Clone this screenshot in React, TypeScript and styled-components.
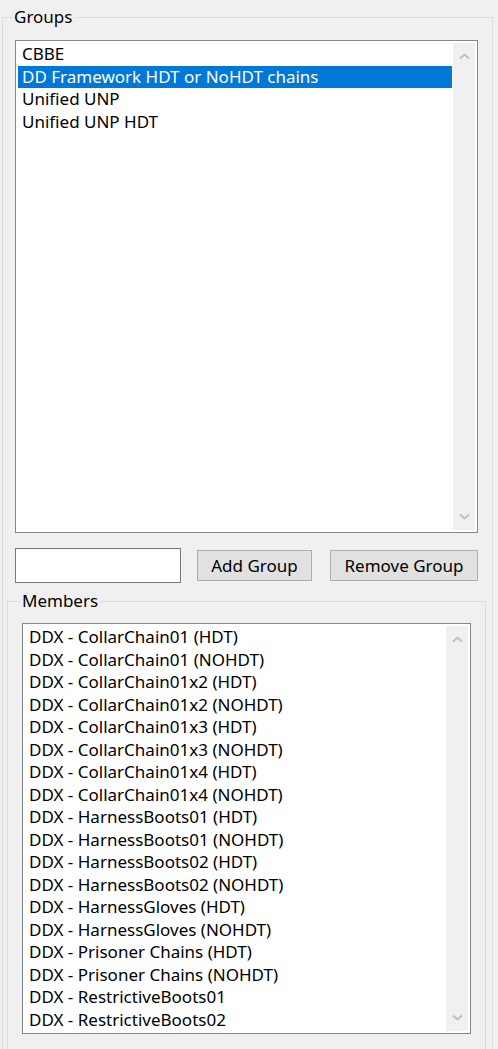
import React from "react";
import styled, { createGlobalStyle } from "styled-components";

const GlobalStyle = createGlobalStyle`
  html, body {
    margin: 0;
    padding: 0;
    background: #f0f0f0;
    overflow: hidden;
  }
  body {
    font-family: "Noto Sans", "Open Sans", sans-serif;
    font-size: 17px;
    color: #000;
  }
`;

const Window = styled.div`
  width: 498px;
  height: 1049px;
  box-sizing: border-box;
  padding: 7px 0 0 2px;
  overflow: hidden;
`;

const GroupBox = styled.fieldset`
  margin: 0;
  min-width: 0;
  box-sizing: border-box;
  border: 1px solid #dcdcdc;
`;

const GroupsBox = styled(GroupBox)`
  width: 491px;
  height: 1100px;
  padding: 13px 0 0 4px;
`;

const MembersBox = styled(GroupBox)`
  width: 479px;
  margin-top: 8px;
  padding: 12px 0 40px 14px;
`;

const Legend = styled.legend<{ $offset: number }>`
  padding: 0 2px;
  margin-left: ${(p) => p.$offset}px;
  line-height: 20px;
  font-size: 17px;
`;

const ListBox = styled.div<{ $w: number; $h: number }>`
  width: ${(p) => p.$w}px;
  height: ${(p) => p.$h}px;
  box-sizing: border-box;
  border: 1px solid #828790;
  background: #fff;
  padding: 2px;
  display: flex;
  margin-left: ${(p) => (p.$w > 455 ? 8 : 0)}px;
`;

const Items = styled.div`
  flex: 1;
  overflow: hidden;
  padding-right: 1px;
`;

const Item = styled.div<{ $selected?: boolean }>`
  height: 22.5px;
  line-height: 22.5px;
  padding-left: 4px;
  white-space: nowrap;
  background: ${(p) => (p.$selected ? "#0078d7" : "transparent")};
  color: ${(p) => (p.$selected ? "#fff" : "#000")};
`;

const ScrollBar = styled.div`
  width: 22px;
  background: #f0f0f0;
  display: flex;
  flex-direction: column;
  justify-content: space-between;
`;

const ArrowBtn = styled.div`
  height: 27px;
  display: flex;
  align-items: center;
  justify-content: center;
`;

const Controls = styled.div`
  display: flex;
  align-items: center;
  margin: 15px 0 0 8px;
`;

const TextBox = styled.input`
  width: 166px;
  height: 35px;
  box-sizing: border-box;
  border: 1px solid #7a7a7a;
  background: #fff;
  margin: 0;
  padding: 0 4px;
  font: inherit;
  outline: none;
`;

const Button = styled.button<{ $w: number; $gap: number }>`
  width: ${(p) => p.$w}px;
  height: 31px;
  margin-left: ${(p) => p.$gap}px;
  box-sizing: border-box;
  border: 1px solid #adadad;
  background: #e1e1e1;
  font: inherit;
  color: #000;
  padding: 0;
`;

const Chevron = ({ down }: { down?: boolean }) => (
  <svg width="11" height="7" viewBox="0 0 11 7">
    <polyline
      points={down ? "1,1.5 5.5,5.5 10,1.5" : "1,5.5 5.5,1.5 10,5.5"}
      fill="none"
      stroke="#c1c1c1"
      strokeWidth="2"
    />
  </svg>
);

const Scroll = () => (
  <ScrollBar>
    <ArrowBtn>
      <Chevron />
    </ArrowBtn>
    <ArrowBtn>
      <Chevron down />
    </ArrowBtn>
  </ScrollBar>
);

const groups = [
  "CBBE",
  "DD Framework HDT or NoHDT chains",
  "Unified UNP",
  "Unified UNP HDT",
];

const members = [
  "DDX - CollarChain01 (HDT)",
  "DDX - CollarChain01 (NOHDT)",
  "DDX - CollarChain01x2 (HDT)",
  "DDX - CollarChain01x2 (NOHDT)",
  "DDX - CollarChain01x3 (HDT)",
  "DDX - CollarChain01x3 (NOHDT)",
  "DDX - CollarChain01x4 (HDT)",
  "DDX - CollarChain01x4 (NOHDT)",
  "DDX - HarnessBoots01 (HDT)",
  "DDX - HarnessBoots01 (NOHDT)",
  "DDX - HarnessBoots02 (HDT)",
  "DDX - HarnessBoots02 (NOHDT)",
  "DDX - HarnessGloves (HDT)",
  "DDX - HarnessGloves (NOHDT)",
  "DDX - Prisoner Chains (HDT)",
  "DDX - Prisoner Chains (NOHDT)",
  "DDX - RestrictiveBoots01",
  "DDX - RestrictiveBoots02",
];

export default function App() {
  return (
    <Window>
      <GlobalStyle />
      <GroupsBox>
        <Legend $offset={5}>Groups</Legend>
        <ListBox $w={463} $h={493}>
          <Items>
            {groups.map((g, i) => (
              <Item key={g} $selected={i === 1}>
                {g}
              </Item>
            ))}
          </Items>
          <Scroll />
        </ListBox>
        <Controls>
          <TextBox />
          <Button $w={115} $gap={16}>Add Group</Button>
          <Button $w={148} $gap={18}>Remove Group</Button>
        </Controls>
        <MembersBox>
          <Legend $offset={-2}>Members</Legend>
          <ListBox $w={449} $h={411}>
            <Items>
              {members.map((m) => (
                <Item key={m}>{m}</Item>
              ))}
            </Items>
            <Scroll />
          </ListBox>
        </MembersBox>
      </GroupsBox>
    </Window>
  );
}
